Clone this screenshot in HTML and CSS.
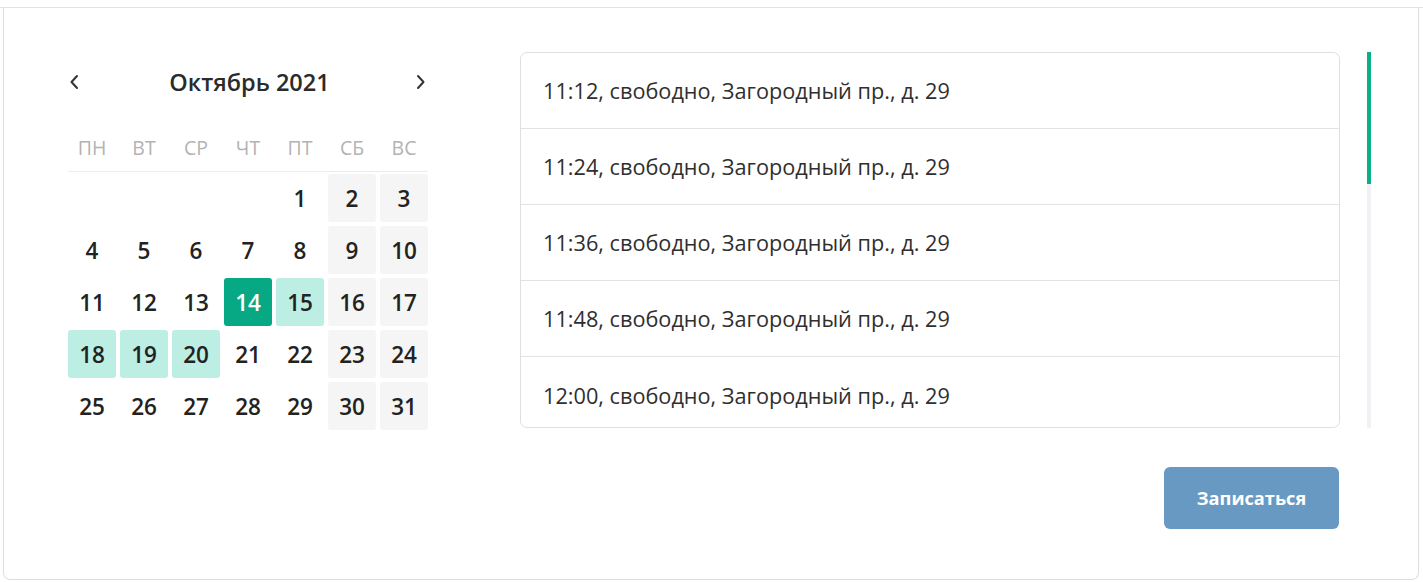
FILE: index.html
```html
<!DOCTYPE html>
<html lang="ru">
<head>
<meta charset="utf-8">
<link rel="stylesheet" href="styles.css">
</head>
<body>
<div class="topbar"></div>
<div class="card">
  <div class="main">
    <div class="calendar">
      <div class="cal-head">
        <button class="nav"><svg width="10" height="16" viewBox="0 0 10 16"><path d="M8 2 L2.5 8 L8 14" fill="none" stroke="#333" stroke-width="2" stroke-linecap="round" stroke-linejoin="round"/></svg></button>
        <div class="month">Октябрь 2021</div>
        <button class="nav"><svg width="10" height="16" viewBox="0 0 10 16"><path d="M2 2 L7.5 8 L2 14" fill="none" stroke="#333" stroke-width="2" stroke-linecap="round" stroke-linejoin="round"/></svg></button>
      </div>
      <div class="weekdays">
        <span>пн</span><span>вт</span><span>ср</span><span>чт</span><span>пт</span><span>сб</span><span>вс</span>
      </div>
      <div class="days">
        <span class="day empty"></span><span class="day empty"></span><span class="day empty"></span><span class="day empty"></span>
        <span class="day">1</span><span class="day we">2</span><span class="day we">3</span>
        <span class="day">4</span><span class="day">5</span><span class="day">6</span><span class="day">7</span><span class="day">8</span><span class="day we">9</span><span class="day we">10</span>
        <span class="day">11</span><span class="day">12</span><span class="day">13</span><span class="day sel">14</span><span class="day avail">15</span><span class="day we">16</span><span class="day we">17</span>
        <span class="day avail">18</span><span class="day avail">19</span><span class="day avail">20</span><span class="day">21</span><span class="day">22</span><span class="day we">23</span><span class="day we">24</span>
        <span class="day">25</span><span class="day">26</span><span class="day">27</span><span class="day">28</span><span class="day">29</span><span class="day we">30</span><span class="day we">31</span>
      </div>
    </div>
    <div class="slots-wrap">
      <div class="slots">
        <div class="slot">11:12, свободно, Загородный пр., д. 29</div>
        <div class="slot">11:24, свободно, Загородный пр., д. 29</div>
        <div class="slot">11:36, свободно, Загородный пр., д. 29</div>
        <div class="slot">11:48, свободно, Загородный пр., д. 29</div>
        <div class="slot last">12:00, свободно, Загородный пр., д. 29</div>
      </div>
      <div class="scrollbar"><div class="thumb"></div></div>
    </div>
  </div>
  <div class="actions">
    <button class="submit">Записаться</button>
  </div>
</div>
</body>
</html>
```

FILE: styles.css
```css
* { box-sizing: border-box; }
html, body { margin: 0; padding: 0; background: #fff; }
body {
  font-family: "Open Sans", "Noto Sans", sans-serif;
  color: #333;
  width: 1423px;
  height: 582px;
  overflow: hidden;
}
.topbar {
  height: 8px;
  border-bottom: 1px solid #e2e2e2;
}
.card {
  margin: 0 4px 0 3px;
  height: 572px;
  border: 1px solid #dedede;
  border-top: none;
  border-radius: 0 0 7px 7px;
  padding: 44px 47px 0 64px;
}
.main {
  display: flex;
  align-items: flex-start;
}
.calendar {
  width: 360px;
}
.cal-head {
  height: 60px;
  display: flex;
  align-items: center;
  justify-content: space-between;
}
.nav {
  border: none;
  background: none;
  padding: 0;
  width: 12px;
  height: 20px;
  display: flex;
  align-items: center;
  justify-content: center;
  cursor: pointer;
}
.nav:last-child { margin-right: 1px; }
.month {
  font-size: 23.5px;
  font-weight: 600;
  color: #2b2b2b;
  margin-left: 4px;
}
.weekdays {
  margin-top: 24px;
  display: grid;
  grid-template-columns: repeat(7, 48px);
  column-gap: 4px;
  height: 36px;
  border-bottom: 1px solid #ececec;
  padding-bottom: 11px;
}
.weekdays span {
  text-align: center;
  text-transform: uppercase;
  font-size: 19.5px;
  line-height: 24px;
  color: #b3b3b3;
}
.days {
  padding-top: 2px;
  display: grid;
  grid-template-columns: repeat(7, 48px);
  grid-auto-rows: 48px;
  gap: 4px;
}
.day {
  display: flex;
  align-items: center;
  justify-content: center;
  border-radius: 3px;
  font-size: 22.5px;
  font-weight: 600;
  color: #222;
}
.day.we { background: #f5f5f5; }
.day.avail { background: #bdeee3; }
.day.sel { background: #07a884; color: #fff; }
.slots-wrap {
  margin-left: 92px;
  display: flex;
  align-items: flex-start;
}
.slots {
  width: 820px;
  height: 376px;
  border: 1px solid #dfdfdf;
  border-radius: 7px;
  overflow: hidden;
}
.slot {
  height: 76px;
  border-bottom: 1px solid #e2e2e2;
  display: flex;
  align-items: center;
  padding-left: 22px;
  font-size: 21.7px;
  color: #2f2f2f;
}
.slot.last { border-bottom: none; }
.scrollbar {
  margin-left: 27px;
  width: 4px;
  height: 376px;
  background: #f1f1f5;
}
.thumb {
  height: 132px;
  background: #08b088;
}
.actions {
  display: flex;
  justify-content: flex-end;
  padding-right: 32px;
  margin-top: 37px;
}
.submit {
  width: 175px;
  height: 62px;
  border: none;
  border-radius: 6px;
  background: #6899c3;
  color: #fff;
  font-family: "Open Sans", "Noto Sans", sans-serif;
  font-size: 18.2px;
  font-weight: 700;
  cursor: pointer;
}
```
